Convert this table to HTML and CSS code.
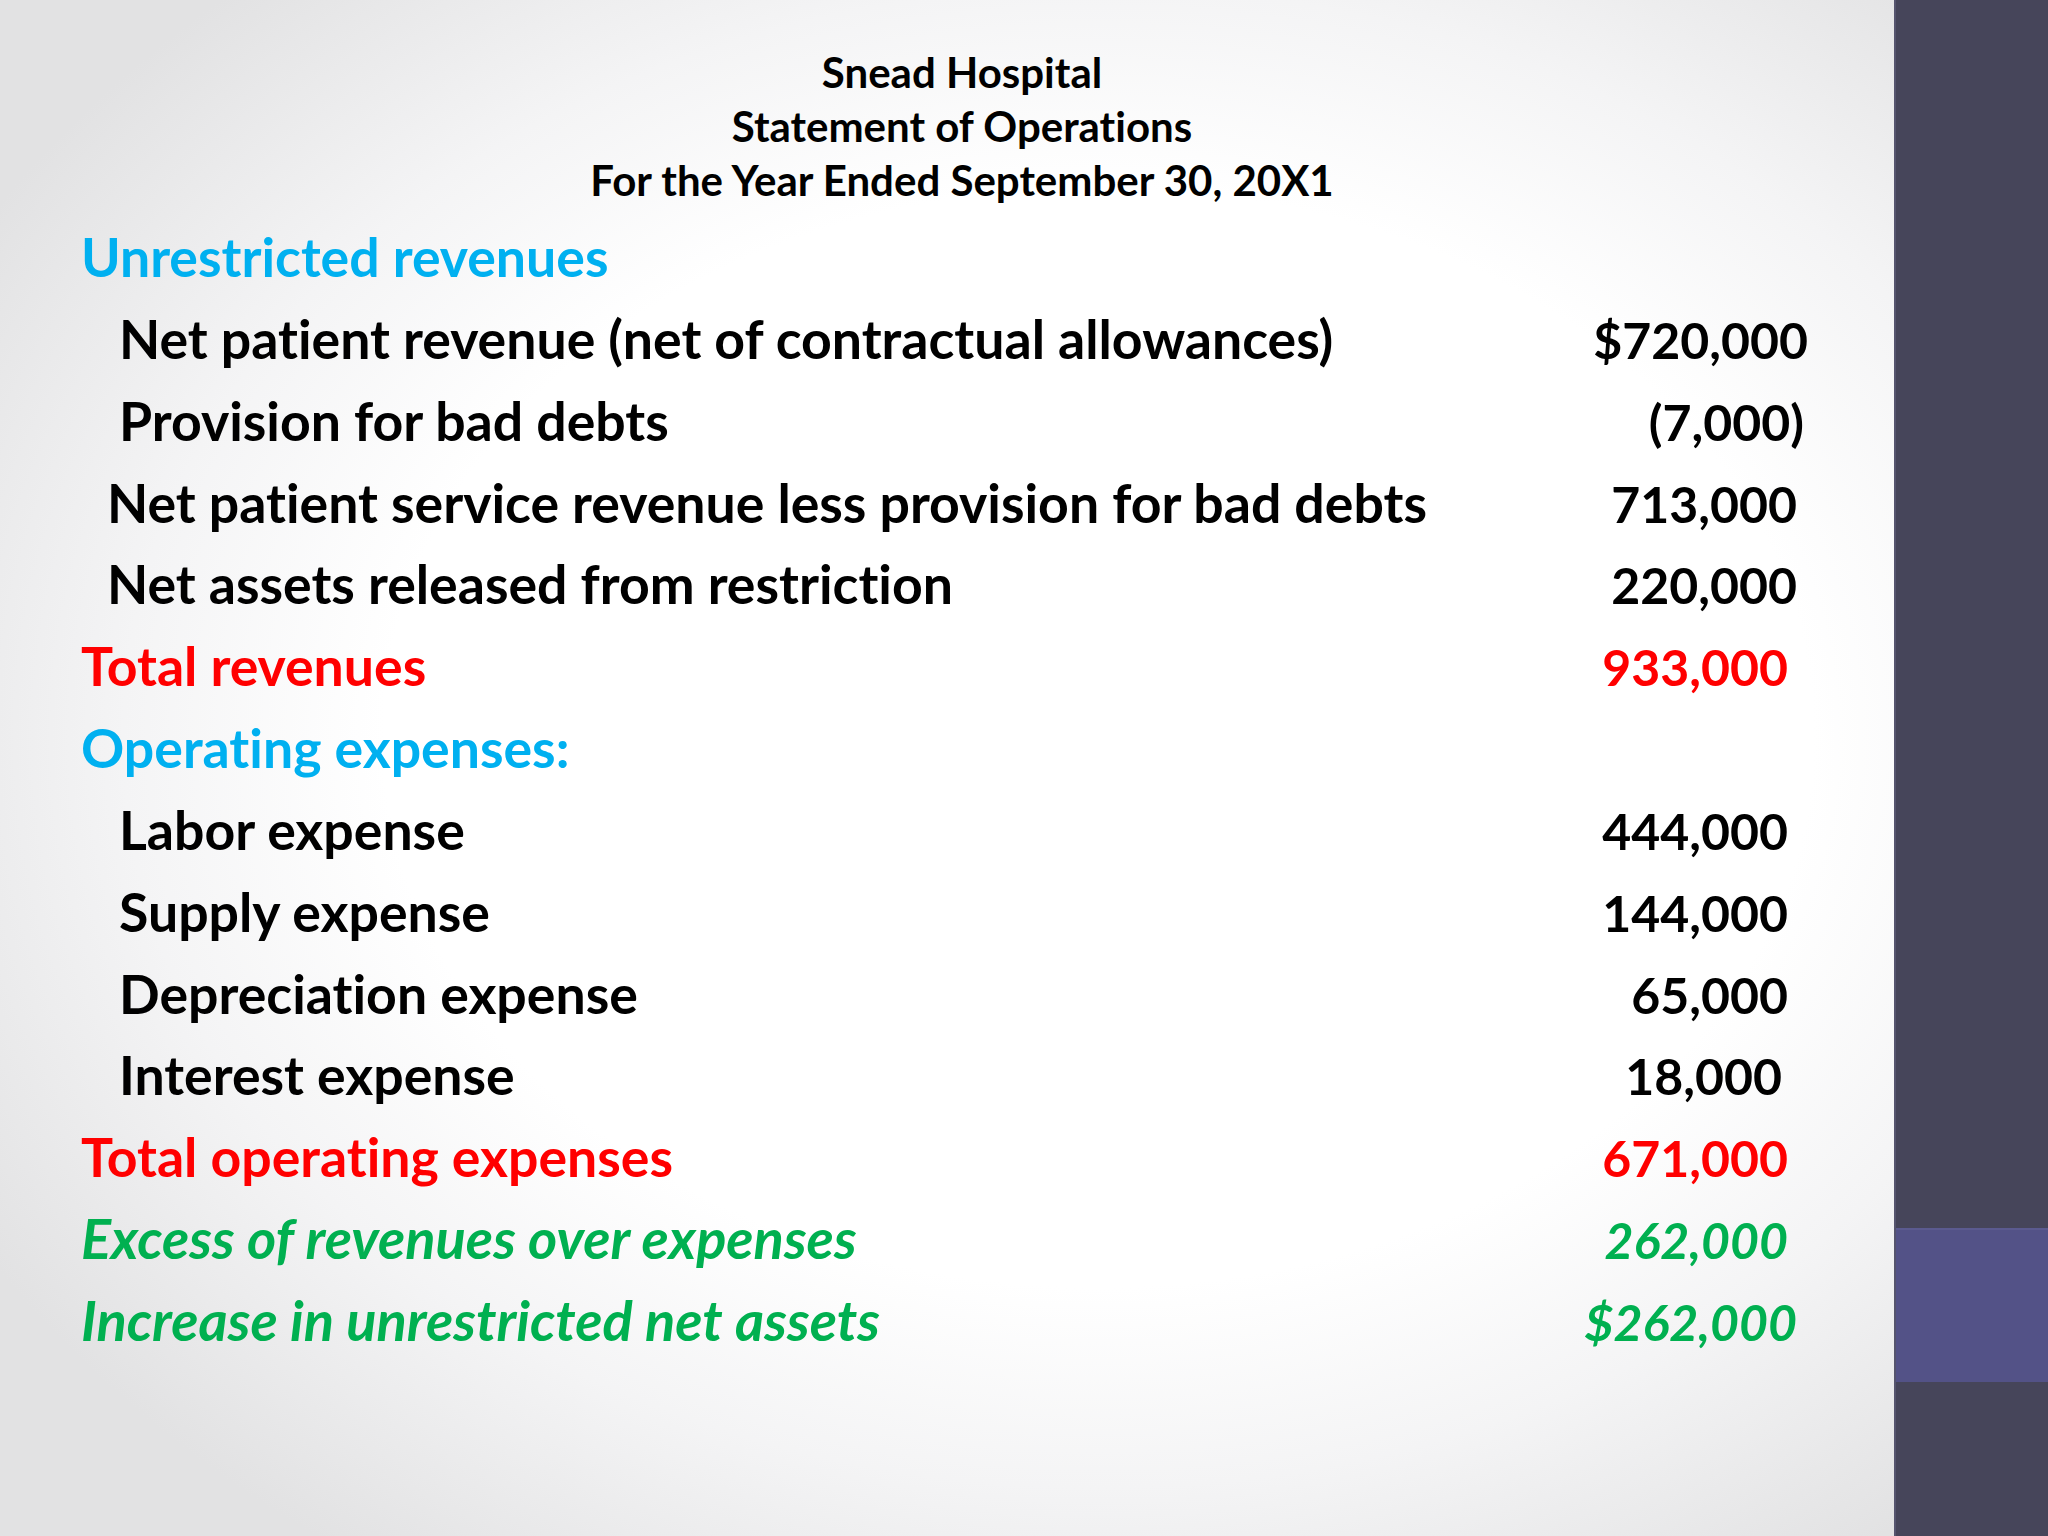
FILE: index.html
```html
<!DOCTYPE html>
<html lang="en">
<head>
<meta charset="utf-8">
<title>Snead Hospital – Statement of Operations</title>
<link rel="stylesheet" href="styles.css">
</head>
<body>
<div class="slide">
  <main class="content">
    <header class="heading">
      <div>Snead Hospital</div>
      <div>Statement of Operations</div>
      <div>For the Year Ended September 30, 20X1</div>
    </header>
    <section class="statement">
      <div class="row section"><span class="label">Unrestricted revenues</span></div>
      <div class="row"><span class="label ind2">Net patient revenue (net of contractual allowances)</span><span class="amt off-20">$720,000</span></div>
      <div class="row"><span class="label ind2">Provision for bad debts</span><span class="amt off-16">(7,000)</span></div>
      <div class="row"><span class="label ind1">Net patient service revenue less provision for bad debts</span><span class="amt off-9">713,000</span></div>
      <div class="row"><span class="label ind1">Net assets released from restriction</span><span class="amt off-9">220,000</span></div>
      <div class="row total"><span class="label">Total revenues</span><span class="amt">933,000</span></div>
      <div class="row section"><span class="label">Operating expenses:</span></div>
      <div class="row"><span class="label ind2">Labor expense</span><span class="amt">444,000</span></div>
      <div class="row"><span class="label ind2">Supply expense</span><span class="amt">144,000</span></div>
      <div class="row"><span class="label ind2">Depreciation expense</span><span class="amt">65,000</span></div>
      <div class="row"><span class="label ind2">Interest expense</span><span class="amt off6">18,000</span></div>
      <div class="row total"><span class="label">Total operating expenses</span><span class="amt">671,000</span></div>
      <div class="row result"><span class="label">Excess of revenues over expenses</span><span class="amt">262,000</span></div>
      <div class="row result"><span class="label">Increase in unrestricted net assets</span><span class="amt off-9">$262,000</span></div>
    </section>
  </main>
  <aside class="sidebar">
    <div class="band-top"></div>
    <div class="band-accent"></div>
    <div class="band-bottom"></div>
  </aside>
</div>
</body>
</html>
```

FILE: styles.css
```css
html, body {
  margin: 0;
  padding: 0;
}

body {
  width: 2048px;
  height: 1536px;
  overflow: hidden;
  font-family: Lato, "Open Sans", "DejaVu Sans", sans-serif;
  font-weight: 700;
  font-variant-ligatures: none;
  color: #000;
}

.slide {
  display: flex;
  width: 2048px;
  height: 1536px;
}

.content {
  flex: 0 0 1894px;
  height: 1536px;
  box-sizing: border-box;
  padding-top: 45px;
  background:
    radial-gradient(ellipse 1300px 1000px at 58% 48%, #ffffff 55%, #f4f4f5 75%, #e2e2e3 100%);
}

.heading {
  margin-left: 81px;
  width: 1762px;
  text-align: center;
  font-size: 42px;
  line-height: 54px;
}

.statement {
  margin-top: 8px;
  padding-left: 81px;
  padding-right: 106px;
  display: flex;
  flex-direction: column;
}

.row {
  display: flex;
  align-items: baseline;
  justify-content: space-between;
  height: 81.85px;
  font-size: 50px;
  line-height: 82px;
  white-space: nowrap;
}

.label {
  font-size: 53.6px;
}

.label.ind1 {
  padding-left: 26px;
}

.label.ind2 {
  padding-left: 38px;
}

.amt {
  text-align: right;
}

.off-20 { margin-right: -20px; }
.off-16 { margin-right: -16px; }
.off-9 { margin-right: -9px; }
.off6 { margin-right: 6px; }

.section {
  color: #00b0f0;
}

.total {
  color: #ff0000;
}

.result {
  color: #00b050;
  font-style: italic;
}

.result .label {
  font-size: 56px;
}

.sidebar {
  flex: 0 0 154px;
  display: flex;
  flex-direction: column;
  border-left: 2px solid #55546e;
  box-sizing: border-box;
}

.band-top {
  height: 1228px;
  background: #46455a;
}

.band-accent {
  height: 154px;
  background: #535287;
  border-top: 2px solid #5b5a8f;
  box-sizing: border-box;
}

.band-bottom {
  flex: 1;
  background: #46455a;
}
```
